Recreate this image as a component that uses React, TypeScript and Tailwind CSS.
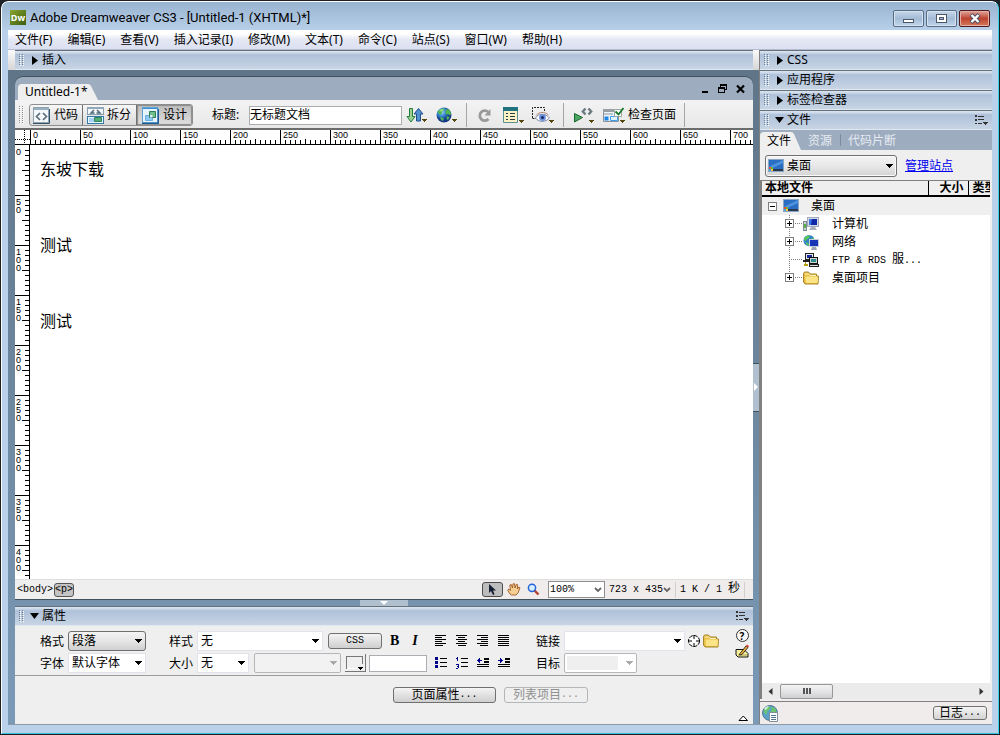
import React, { useEffect, useRef, useState } from 'react';

const UI_FONT = "font-['Noto_Sans','Noto_Sans_CJK_SC',sans-serif]";
const MONO_FONT = "font-['Liberation_Mono','Noto_Sans_CJK_SC',monospace]";
const RULER_FONT = "font-['Liberation_Sans',sans-serif]";

const MENUS = ['文件(F)', '编辑(E)', '查看(V)', '插入记录(I)', '修改(M)', '文本(T)', '命令(C)', '站点(S)', '窗口(W)', '帮助(H)'];

/* ---------- small shared pieces ---------- */

const Grip = ({ tall = false }: { tall?: boolean }) => (
  <svg width="5" height={tall ? 18 : 12} shapeRendering="crispEdges" className="shrink-0">
    {Array.from({ length: tall ? 9 : 6 }, (_, i) => (
      <g key={i}>
        <path d={`M0 ${i * 2}h1v1h-1zM3 ${i * 2}h1v1h-1z`} fill={tall ? '#8f8f8f' : '#6f7f95'} />
        <path d={`M1 ${i * 2 + 1}h1v1h-1zM4 ${i * 2 + 1}h1v1h-1z`} fill="#fff" />
      </g>
    ))}
  </svg>
);

const Caret = ({ color = '#000' }: { color?: string }) => (
  <svg width="7" height="4" shapeRendering="crispEdges">
    <path d="M0 0h7v1h-1v1h-1v1h-1v1h-1v-1h-1v-1h-1v-1h-1z" fill={color} />
  </svg>
);

const OptionsIcon = () => (
  <svg width="13" height="10" shapeRendering="crispEdges">
    <path d="M0 0h2v2h-2zM0 4h2v2h-2zM0 8h2v1h-2zM3 1h6v1h-6zM3 4h6v1h-6zM3 8h4v1h-4z" fill="#333" />
    <path d="M8 7h5v1h-1v1h-1v1h-1v-1h-1v-1h-1z" fill="#333" />
  </svg>
);

const PanelHeader = ({ title, open = false, options = false }: { title: string; open?: boolean; options?: boolean }) => (
  <div className="flex h-5 shrink-0 items-center border-t border-[#68727e] bg-linear-to-b from-[#d7e2ef] from-5% via-[#afc1d9] via-20% to-[#c9d6e5] pb-px pl-1 shadow-[inset_0_-1px_0_#dfe7f0]">
    <Grip />
    <button aria-expanded={open} className="ml-1.5 flex items-center text-xs leading-4">
      <span className="flex w-[12px] items-center">
        {open ? (
          <svg width="9" height="6"><path d="M0 0h9l-4.500 6z" /></svg>
        ) : (
          <svg width="7" height="9" className="ml-0.5"><path d="M0 0v9l6-4.500z" /></svg>
        )}
      </span>
      {title}
    </button>
    {options && (
      <button aria-label="面板选项" className="ml-auto mr-1">
        <OptionsIcon />
      </button>
    )}
  </div>
);

interface ComboProps {
  label: string;
  value?: string;
  look?: 'raised' | 'flat' | 'inset';
  disabled?: boolean;
  className?: string;
  id?: string;
}

const COMBO_LOOKS = {
  raised: 'rounded-[3px] border-[#707070] bg-linear-to-b from-[#f4f4f4] via-[#e6e6e6] to-[#cfcfcf]',
  flat: 'border-[#e2e3ea] bg-white disabled:rounded-[2px] disabled:border-[#b4b7b8] disabled:bg-[#f2f2f2]',
  inset: 'rounded-[2px] border-[#b4b7b8] bg-linear-to-r from-[#efefef] from-75% to-white to-75% shadow-[inset_0_0_0_2px_#fff]',
};

const Combo = ({ label, value = '', look = 'flat', disabled = false, className = '', id }: ComboProps) => (
  <div className={`relative shrink-0 ${className}`}>
    <select
      id={id}
      aria-label={label}
      disabled={disabled}
      defaultValue={value}
      className={`block h-5 w-full appearance-none border pl-[3px] text-xs leading-4 outline-none ${COMBO_LOOKS[look]}`}
    >
      <option>{value}</option>
    </select>
    <span className="pointer-events-none absolute inset-y-0 right-1 flex items-center">
      <Caret color={disabled ? '#aaa' : '#000'} />
    </span>
  </div>
);

/* ---------- toolbar icons ---------- */

const DropMark = ({ x, y }: { x: number; y: number }) => (
  <path d={`M${x} ${y}h5v1h-1v1h-1v1h-1v-1h-1v-1h-1z`} fill="#55480f" shapeRendering="crispEdges" />
);

const CodeIcon = () => (
  <svg width="17" height="17">
    <rect x=".5" y=".5" width="15" height="15" fill="#f4f8fb" stroke="#8fa3b1" />
    <path d="M1 1h15v2H1z" fill="#9bb0bf" />
    <path d="M0 16.500h16.500V2" fill="none" stroke="#35536a" />
    <path d="M7 6L3.500 9.500 7 13M10 6l3.500 3.500L10 13" fill="none" stroke="#5c6e7c" strokeWidth="1.700" />
  </svg>
);

const SplitIcon = () => (
  <svg width="17" height="17">
    <rect x=".5" y=".5" width="16" height="7" fill="#f4f8fb" stroke="#879dac" />
    <path d="M0 0h17v2H0z" fill="#91a8b8" />
    <path d="M7 3l-3 3h3.500M10 3l3 3H9.500" fill="none" stroke="#526b7b" strokeWidth="1.500" />
    <rect x=".5" y="9.500" width="16" height="7" fill="#e9f5ff" stroke="#327ba9" />
    <path d="M2 11h6v4H2z" fill="#a8d3f6" />
    <path d="M7.500 10.500h7v4h-7z" fill="#54ad72" stroke="#2f8560" />
  </svg>
);

const DesignIcon = () => (
  <svg width="17" height="17">
    <rect x=".5" y=".5" width="15" height="15" fill="#e5f3ff" stroke="#5fa3d6" />
    <path d="M1 1h15v1H1z" fill="#3b91cf" />
    <path d="M0 16.500h16.500V2" fill="none" stroke="#205b90" strokeWidth="1.500" />
    <path d="M3.500 8.500h7v5h-7z" fill="#8ec8f5" stroke="#6aaede" />
    <path d="M7.500 4.500h6v6h-6z" fill="#6cc088" stroke="#2f7d50" />
    <path d="M8 8h2.500v2.500H8z" fill="#d9f0ff" />
  </svg>
);

const TransferIcon = () => (
  <svg width="21" height="17">
    <path d="M3.500 1.500h3v8H9L5 15 1 9.500h2.500z" fill="#9bd093" stroke="#267d3b" />
    <path d="M10.500 14V7H8l4.500-5.500L17 7h-2.500v7z" fill="#5290cd" stroke="#1d4f8f" />
    <DropMark x={16} y={12} />
  </svg>
);

const GlobeIcon = () => (
  <svg width="21" height="17">
    <defs>
      <radialGradient id="sea" cx=".35" cy=".3">
        <stop offset="0" stopColor="#a6dcfa" />
        <stop offset=".6" stopColor="#2f7cc9" />
        <stop offset="1" stopColor="#173a88" />
      </radialGradient>
    </defs>
    <circle cx="8" cy="8" r="7.500" fill="url(#sea)" />
    <path d="M1.500 5c1.500-3 4.500-4 7-3.500L7.500 3.500 6 4.500v2L4 7.500 2.500 6.500zM10.500 2l3 1 1.800 4-2 1.500-1-1.500-2 .5-1-2.500zM4 9.500l4 2-1 2.500-2-1zM11 9l2.500 1-1.500 3-1.500-1z" fill="#4fb453" />
    <path d="M3 4c1.500-1.500 3-2 5-1.800L6.500 3.500 5 4.500z" fill="#a8e68c" />
    <DropMark x={16} y={12} />
  </svg>
);

const RefreshIcon = () => (
  <svg width="15" height="15">
    <path d="M11.500 11a5 5 0 1 1-.3-7" fill="none" stroke="#999" strokeWidth="2.800" />
    <path d="M13.500 1v6.500H7.500z" fill="#999" />
  </svg>
);

const ViewOptionsIcon = () => (
  <svg width="21" height="17">
    <path d="M.5 1.500h14v14H.5z" fill="#faf1c4" stroke="#5b8f92" />
    <path d="M0 0h15v4H0z" fill="#1f7480" />
    <path d="M3 6h2v1H3zM3 9h2v1H3zM3 12h2v1H3zM7 6h5v1H7zM7 9h5v1H7zM7 12h5v1H7z" fill="#273b41" shapeRendering="crispEdges" />
    <DropMark x={16} y={13} />
  </svg>
);

const VisualAidsIcon = () => (
  <svg width="23" height="17">
    <path d="M.5 11V.5h12V5M.5 11.500H4" fill="none" stroke="#222" strokeDasharray="2 1" />
    <path d="M3.500 11c3-5 10-5 14 0-4 4.500-11 4.500-14 0z" fill="#fff" stroke="#7d89a6" />
    <path d="M4 8.500c3-4 9-4 12.500-.5" fill="none" stroke="#b58878" />
    <circle cx="10.500" cy="10.500" r="3.400" fill="#6b91db" />
    <circle cx="10.500" cy="10.500" r="1.500" fill="#182b60" />
    <DropMark x={17} y={13} />
  </svg>
);

const ValidateIcon = () => (
  <svg width="21" height="17">
    <path d="M1.500 6.500l8 4-8 4.500z" fill="#4ba564" stroke="#17672d" />
    <path d="M12.500 1.500L9.800 4.500l2.700 3M15.500 1.500l2.700 3-2.700 3" fill="none" stroke="#6d7a82" strokeWidth="2.400" />
    <DropMark x={16} y={13} />
  </svg>
);

const CheckPageIcon = () => (
  <svg width="22" height="17">
    <path d="M.5 3.500h15v11H.5z" fill="#eef2f5" stroke="#8c9297" />
    <path d="M0 2h11v3H0z" fill="#999ea3" />
    <path d="M1 6h9v2H1z" fill="#b9c6cf" />
    <path d="M1.500 9.500h4v4h-4z" fill="#1c86e8" />
    <path d="M7.500 9.500h7v4h-7z" fill="#dff2ff" stroke="#40a0ed" />
    <path d="M11.500 2.500h7v7h-7z" fill="#fff" stroke="#9da8a2" />
    <path d="M12.500 4.500l3 3L20.500 1" fill="none" stroke="#14752b" strokeWidth="1.800" />
    <DropMark x={17} y={13} />
  </svg>
);

/* ---------- title bar and menu ---------- */

const TitleBar = () => (
  <header className="flex h-7 shrink-0 items-start pl-[2px] pr-[2px]">
    <div className="mt-2 flex h-[15px] w-4 items-center justify-center bg-linear-to-br from-[#8ba62c] to-[#3c5d11] text-[9px] font-bold leading-none text-white">Dw</div>
    <h1 className="ml-1 mt-2 font-['Roboto','Noto_Sans',sans-serif] text-[13px] leading-4 text-black">Adobe Dreamweaver CS3 - [Untitled-1 (XHTML)*]</h1>
    <div className="ml-auto mt-2 flex gap-0.5">
      <button aria-label="最小化" className="flex h-[17px] w-[31px] items-center justify-center rounded-xs border border-[#586b83] bg-linear-to-b from-[#c6d7ea] via-[#a4bbd6] to-[#c1d6eb] shadow-[inset_0_0_0_1px_#d6e4f2]">
        <svg width="11" height="11"><rect x=".5" y="6.500" width="10" height="3" fill="#fff" stroke="#4b5669" /></svg>
      </button>
      <button aria-label="最大化" className="flex h-[17px] w-[31px] items-center justify-center rounded-xs border border-[#586b83] bg-linear-to-b from-[#c6d7ea] via-[#a4bbd6] to-[#c1d6eb] shadow-[inset_0_0_0_1px_#d6e4f2]">
        <svg width="11" height="11"><rect x=".5" y="1.500" width="10" height="8" fill="#fff" stroke="#4b5669" /><rect x="3.500" y="4.500" width="4" height="2" fill="#a4bbd6" stroke="#4b5669" /></svg>
      </button>
      <button aria-label="关闭" className="flex h-[17px] w-[31px] items-center justify-center rounded-xs border border-[#521a1d] bg-linear-to-b from-[#dda59b] via-[#bd4230] to-[#d27a5c] shadow-[inset_0_0_0_1px_#e3b0a5]">
        <svg width="12" height="11"><path d="M2 1.500l8 8M10 1.500l-8 8" stroke="#4b4f66" strokeWidth="4.200" /><path d="M2.500 2l7 7M9.500 2l-7 7" stroke="#fff" strokeWidth="2.400" /></svg>
      </button>
    </div>
  </header>
);

const MenuBar = () => (
  <nav className="flex h-5 shrink-0 items-center gap-px border-b border-[#b4bccd] bg-linear-to-b from-white from-20% via-[#e4e8f4] via-50% to-[#dbe0f2]">
    {MENUS.map((m) => (
      <button key={m} className="px-[7px] text-xs leading-4">{m}</button>
    ))}
  </nav>
);

/* ---------- rulers ---------- */

const range = (n: number) => Array.from({ length: n }, (_, i) => i);

// Number of 50px ruler segments needed to fill the element
const useSegments = (axis: 'width' | 'height') => {
  const ref = useRef<HTMLDivElement>(null);
  const [count, setCount] = useState(9);

  useEffect(() => {
    if (!ref.current) return;
    const observer = new ResizeObserver(([entry]) => setCount(Math.ceil(entry.contentRect[axis] / 50)));
    observer.observe(ref.current);
    return () => observer.disconnect();
  }, [axis]);

  return { ref, count };
};

const TopRuler = () => {
  const { ref, count } = useSegments('width');
  return (
    <div className="flex h-[15px] shrink-0 border-b border-black bg-white">
      <svg width="15" height="14" className="shrink-0" shapeRendering="crispEdges">
        <path d="M0 9.500h15M9.500 0v14" stroke="#000" strokeDasharray="1 1" />
      </svg>
      <div ref={ref} className="flex min-w-0 flex-1 overflow-x-clip">
        {range(count).map((i) => (
          <div key={i} className="flex h-[14px] w-[50px] shrink-0 flex-col justify-between border-l border-black">
            <span className={`pl-0.5 text-[9px] leading-[10px] ${RULER_FONT}`}>{i * 50}</span>
            <svg width="49" height="5" shapeRendering="crispEdges" className="-mt-1 shrink-0">
              {range(9).map((t) => (
                <rect key={t} x={t * 5 + 4} y={t === 4 ? 0 : 1} width="1" height="5" />
              ))}
            </svg>
          </div>
        ))}
      </div>
    </div>
  );
};

const SideRuler = () => {
  const { ref, count } = useSegments('height');
  return (
    <div ref={ref} className="w-[15px] shrink-0 overflow-y-clip border-r border-black bg-white">
      {range(count).map((i) => (
        <div key={i} className={`flex h-[50px] justify-between border-t ${i === 0 ? 'border-white' : 'border-black'}`}>
          <span className={`ml-px w-[6px] break-all pt-0.5 text-[9px] leading-[8px] ${RULER_FONT}`}>{i * 50}</span>
          <svg width="7" height="49" shapeRendering="crispEdges">
            {range(9).map((t) => (
              <rect key={t} x={t === 4 ? 0 : 3} y={t * 5 + 4} width="7" height="1" />
            ))}
          </svg>
        </div>
      ))}
    </div>
  );
};

/* ---------- document window ---------- */

const DocumentTabs = () => (
  <div className="flex h-6 shrink-0 items-end rounded-t-lg border-t border-[#41525f] bg-[#9dacbf] pl-[3px]">
    <button className="h-4 rounded-tl-sm bg-[#efefef] pl-[7px] text-xs leading-4">Untitled-1*</button>
    <svg width="10" height="16" className="shrink-0"><path d="M0 0q2 0 3 2l7 14H0z" fill="#efefef" /></svg>
    <div className="mb-1.5 ml-auto mr-2 flex items-end gap-2">
      <button aria-label="最小化文档"><svg width="8" height="10"><path d="M1 7h6v2H1z" /></svg></button>
      <button aria-label="还原文档">
        <svg width="11" height="10" shapeRendering="crispEdges"><path d="M3 0h7v6H8V5h1V2H4v1H3zM1 3h7v6H1zM2 5v3h5V5z" fillRule="evenodd" /></svg>
      </button>
      <button aria-label="关闭文档"><svg width="9" height="10"><path d="M1 1.500l7 7M8 1.500l-7 7" stroke="#000" strokeWidth="2.200" /></svg></button>
    </div>
  </div>
);

const Divider = ({ className = '' }: { className?: string }) => <span className={`h-6 w-px shrink-0 bg-[#a5a5a5] ${className}`} />;

const DocumentToolbar = () => (
  <div className="flex h-[30px] shrink-0 items-center border-b-2 border-[#6c6c6c] bg-linear-to-b from-[#f3f3f3] to-[#e8e8e8] pl-1 pt-0.5 text-xs leading-4">
    <Grip tall />
    <div className="ml-[5px] flex h-[22px] shrink-0 overflow-hidden rounded-[3px] border border-[#8e8e8e] bg-linear-to-b from-[#f7f7f7] to-[#d9d9d9]">
      <button className="flex w-[53px] items-center gap-1 border-r border-[#6f6f6f] pl-[3px]"><CodeIcon />代码</button>
      <button className="flex w-[54px] items-center gap-[3px] border-r border-[#6f6f6f] pl-1"><SplitIcon />拆分</button>
      <button aria-pressed className="flex w-[55px] items-center gap-1 bg-linear-to-b from-[#bdbdbd] to-[#e0e0e0] pl-[5px] shadow-[inset_0_0_1px_1px_#8a8a8a]"><DesignIcon />设计</button>
    </div>
    <label htmlFor="doc-title" className="ml-[19px] w-[37px] shrink-0">标题:</label>
    <input id="doc-title" defaultValue="无标题文档" className="h-[19px] w-[153px] shrink-0 border border-[#abadb3] bg-white pb-0.5 outline-none" />
    <button aria-label="文件管理" className="ml-1"><TransferIcon /></button>
    <button aria-label="在浏览器中预览" className="ml-[9px]"><GlobeIcon /></button>
    <Divider className="ml-[9px]" />
    <button aria-label="刷新" className="ml-2.5"><RefreshIcon /></button>
    <button aria-label="视图选项" className="ml-[11px]"><ViewOptionsIcon /></button>
    <button aria-label="可视化助理" className="ml-2"><VisualAidsIcon /></button>
    <Divider className="ml-2" />
    <button aria-label="验证标记" className="ml-[9px]"><ValidateIcon /></button>
    <button className="ml-[9px] flex shrink-0 items-center gap-[3px]"><CheckPageIcon />检查页面</button>
    <Divider className="ml-2" />
  </div>
);

const StatusBar = () => (
  <div className={`flex h-5 shrink-0 items-center border-t border-[#dedede] bg-[#efefef] text-[10px] leading-3 ${MONO_FONT}`}>
    <button className="ml-0.5 w-[37px] text-left">&lt;body&gt;</button>
    <button className="rounded-[3px] border border-[#555] bg-[#c4c4c4]">&lt;p&gt;</button>
    <div className="ml-auto flex h-full items-center bg-[#f1ecec]">
      <button aria-label="选取工具" aria-pressed className="flex h-[15px] w-[21px] items-center justify-center rounded-[3px] border border-[#4d4d4d] bg-[#bdbdbd]">
        <svg width="8" height="12"><path d="M1 0v9l2-2 2 4 1.500-.8L5 6.500h3z" fill="#151e33" /></svg>
      </button>
      <button aria-label="手形工具" className="ml-1">
        <svg width="14" height="13">
          <path d="M3 11L.8 7.500 1.500 6l2 1.500L2.800 2l1.500-.5L5.500 5 6 .8h1.500L8 5l1.300-3.700 1.400.4L10.300 6l1.500-2 1.200.7-2 5.300-2 2H4.500z" fill="#f6cf95" stroke="#9c5a20" strokeWidth=".9" />
        </svg>
      </button>
      <button aria-label="缩放工具" className="ml-1.5">
        <svg width="13" height="13"><path d="M7.500 7.500l4 4" stroke="#b8402a" strokeWidth="2.400" /><circle cx="5" cy="4.800" r="3.600" fill="#d6efff" stroke="#2663d6" strokeWidth="1.500" /></svg>
      </button>
      <div className="relative ml-2 w-[57px]">
        <select aria-label="缩放比例" className="block h-[17px] w-full appearance-none border border-[#8f8f8f] bg-white pl-px outline-none">
          <option>100%</option>
        </select>
        <svg width="8" height="6" className="pointer-events-none absolute right-[3px] top-[6px]"><path d="M1 1l3 3 3-3" fill="none" stroke="#666" strokeWidth="1.800" /></svg>
      </div>
      <button className="ml-1 flex items-center whitespace-pre">
        723 x 435
        <svg width="8" height="6"><path d="M1 1l3 3 3-3" fill="none" stroke="#666" strokeWidth="1.800" /></svg>
      </button>
      <span className="ml-1 h-4 w-px bg-[#cfcfcf]" />
      <span className="ml-1 whitespace-pre">1 K / 1 <span className="text-xs leading-3">秒</span></span>
      <span className="ml-1 mr-2 h-4 w-px bg-[#cfcfcf]" />
    </div>
  </div>
);

const DocumentWindow = () => (
  <section className="mt-1.5 flex min-h-0 flex-1 flex-col border-b border-[#41525f]">
    <DocumentTabs />
    <DocumentToolbar />
    <TopRuler />
    <div className="flex min-h-0 flex-1 bg-white">
      <SideRuler />
      <article className="flex-1 pl-2.5 pt-[14px] text-base leading-5">
        <p>东坡下载</p>
        <p className="mt-14">测试</p>
        <p className="mt-14">测试</p>
      </article>
    </div>
    <StatusBar />
  </section>
);

/* ---------- properties panel ---------- */

const LinesIcon = ({ d, blue }: { d: string; blue?: string }) => (
  <svg width="13" height="12" shapeRendering="crispEdges">
    <path d={d} fill="#000" />
    {blue && <path d={blue} fill="#00008b" />}
  </svg>
);

const FORMAT_ICONS = [
  { label: '左对齐', d: 'M0 0h11v1H0zM0 2h7v1H0zM0 4h11v1H0zM0 6h7v1H0zM0 8h11v1H0zM0 10h8v1H0z' },
  { label: '居中对齐', d: 'M0 0h11v1H0zM2 2h7v1H2zM0 4h11v1H0zM2 6h7v1H2zM0 8h11v1H0zM2 10h8v1H2z' },
  { label: '右对齐', d: 'M0 0h11v1H0zM4 2h7v1H4zM0 4h11v1H0zM4 6h7v1H4zM0 8h11v1H0zM3 10h8v1H3z' },
  { label: '两端对齐', d: 'M0 0h11v1H0zM0 2h11v1H0zM0 4h11v1H0zM0 6h11v1H0zM0 8h11v1H0zM0 10h11v1H0z' },
  { label: '项目列表', d: 'M5 1h7v1H5zM5 5h7v1H5zM5 9h7v1H5z', blue: 'M0 0h3v3H0zM0 4h3v3H0zM0 8h3v3H0z' },
  { label: '编号列表', d: 'M5 1h7v1H5zM5 5h7v1H5zM5 9h7v1H5z', blue: 'M1 0h1v4H1zM0 1h1v1H0zM0 7h3v1H0zM2 8h1v3H2zM1 9h1v1H1zM0 11h2v1H0z' },
  { label: '文本凸出', d: 'M7 1h5v2H7zM7 4h5v2H7zM0 7h12v1H0zM0 9h12v1H0z', blue: 'M0 3h5v1H0zM1 2h1v3H1zM2 1h1v5H2z' },
  { label: '文本缩进', d: 'M7 1h5v2H7zM7 4h5v2H7zM0 7h12v1H0zM0 9h12v1H0z', blue: 'M0 3h5v1H0zM3 2h1v3H3zM2 1h1v5H2z' },
];

const FolderIcon = () => (
  <svg width="16" height="14">
    <path d="M.5 11V2.500l1-1.500h4l1.500 2h6.500v2h2l-.5 8H2z" fill="#e9bf45" stroke="#a8852a" />
    <path d="M2.500 5.500h12.500l-.5 6.500H3z" fill="#fbe486" />
    <path d="M2 3h4l1 1.500h6" stroke="#fff5bd" fill="none" />
  </svg>
);

const PropertiesPanel = () => (
  <section className="flex shrink-0 flex-col">
    <PanelHeader title="属性" open options />
    <div className="flex flex-col bg-[#efefef] text-xs">
      <div className="flex h-[50px] border-b border-[#9c9c9c] pl-[25px] pt-[5px]">
        <div className="grid shrink-0 grid-cols-[28px_78px] content-start items-center gap-y-0.5">
          <label htmlFor="fmt" className="pt-0.5">格式</label>
          <Combo id="fmt" label="格式" value="段落" look="raised" />
          <label htmlFor="font" className="pt-0.5">字体</label>
          <Combo id="font" label="字体" value="默认字体" />
        </div>

        <div className="ml-[23px] flex shrink-0 flex-col gap-0.5">
          <div className="flex h-5 items-center">
            <label htmlFor="style" className="w-7 pt-0.5">样式</label>
            <Combo id="style" label="样式" value="无" className="w-[126px]" />
            <button className={`ml-[5px] h-4 w-[54px] rounded-[3px] border border-[#707070] bg-linear-to-b from-[#f4f4f4] to-[#cfcfcf] text-[10px] leading-3 ${MONO_FONT}`}>CSS</button>
            <button className="ml-2 font-['Liberation_Serif',serif] text-sm font-bold leading-4">B</button>
            <button className="ml-[13px] font-['Liberation_Serif',serif] text-sm font-bold italic leading-4">I</button>
          </div>
          <div className="flex h-5 items-center">
            <label htmlFor="size" className="w-7 pt-0.5">大小</label>
            <Combo id="size" label="大小" value="无" className="w-[52px]" />
            <Combo label="单位" disabled className="ml-[5px] w-[87px]" />
            <button aria-label="文本颜色" className="ml-1 h-[18px] w-[21px] border-b border-r border-[#777]">
              <svg width="20" height="16" shapeRendering="crispEdges">
                <path d="M1.500 14V1.500H17V9" fill="none" stroke="#777" />
                <path d="M2 13h10" stroke="#fff" />
                <path d="M13 12h5v1h-1v1h-1v1h-1v-1h-1v-1h-1z" />
              </svg>
            </button>
            <input aria-label="颜色值" className="ml-[3px] h-[17px] w-[58px] border border-[#abadb3] bg-white" />
          </div>
        </div>

        <div className="ml-2 grid shrink-0 grid-cols-[repeat(4,21px)] content-start gap-y-0.5">
          {FORMAT_ICONS.map((icon) => (
            <button key={icon.label} aria-label={icon.label} className="flex h-5 items-center">
              <LinesIcon d={icon.d} blue={icon.blue} />
            </button>
          ))}
        </div>

        <div className="ml-[17px] grid shrink-0 grid-cols-[28px_121px] content-start items-center gap-y-0.5">
          <label htmlFor="link" className="pt-0.5">链接</label>
          <Combo id="link" label="链接" />
          <label htmlFor="target" className="pt-0.5">目标</label>
          <Combo id="target" label="目标" look="inset" disabled className="w-[73px]" />
        </div>

        <div className="ml-[2px] flex h-5 shrink-0 items-center gap-0.5">
          <button aria-label="指向文件">
            <svg width="14" height="14">
              <circle cx="7" cy="7" r="5.500" fill="#fff" stroke="#000" strokeDasharray="4 1" />
              <path d="M7 1v4M7 9v4M1 7h4M9 7h4" stroke="#000" />
            </svg>
          </button>
          <button aria-label="浏览文件"><FolderIcon /></button>
        </div>

        <div className="-mt-0.5 ml-auto mr-1 flex shrink-0 flex-col items-center gap-0.5">
          <button aria-label="帮助" className="flex h-[13px] w-[13px] items-center justify-center rounded-full border border-[#333] bg-[#f8f8f8] text-[10px] font-bold leading-none">?</button>
          <button aria-label="快速标签编辑器">
            <svg width="14" height="14">
              <path d="M1 5.500h8l4 4v3.500H3l-2-2z" fill="#f7efa2" stroke="#111" />
              <path d="M3 11h9" stroke="#a5a044" />
              <path d="M5 9.500L11 2l2 1.500-6 7-2.500.5z" fill="#f0ac39" stroke="#222" strokeWidth=".9" />
              <path d="M11 2l1-1.500 2 1.500-1 1.500z" fill="#d84030" />
            </svg>
          </button>
        </div>
      </div>

      <div className="flex h-12 pt-[11px]">
        <div className="flex flex-1 items-start justify-center gap-2 pl-[212px]">
          <button className="flex h-4 w-[103px] items-center justify-center rounded-[3px] border border-[#707070] bg-linear-to-b from-[#f4f4f4] to-[#cfcfcf] leading-4">
            页面属性<span className={`text-[10px] ${MONO_FONT}`}>...</span>
          </button>
          <button disabled className="flex h-4 w-[84px] items-center justify-center rounded-[3px] border border-[#b4b7b8] leading-4 text-[#909090]">
            列表项目<span className={`text-[10px] ${MONO_FONT}`}>...</span>
          </button>
        </div>
        <button aria-label="收起属性" className="-ml-4 mr-1 self-end pb-[3px]">
          <svg width="11" height="6"><path d="M1 5.500h8.500L5.300 1z" fill="#fff" stroke="#000" /></svg>
        </button>
      </div>
    </div>
  </section>
);

/* ---------- files panel ---------- */

const DesktopIcon = () => (
  <svg width="16" height="14">
    <rect x=".5" y=".5" width="15" height="12" fill="#2a6ec4" stroke="#8aa5c4" />
    <path d="M1 8C5 5 10 4 15 1v3C11 6 6 8 3 10H1z" fill="#4d93de" />
    <path d="M5 10h10v2H5z" fill="#29394d" />
    <path d="M1 8h2v2H1z" fill="#e34c2c" /><path d="M3 8h2v2H3z" fill="#70b83a" /><path d="M1 10h2v2H1z" fill="#42a7e8" /><path d="M3 10h2v2H3z" fill="#f4ca30" />
  </svg>
);

const ComputerIcon = () => (
  <svg width="16" height="15">
    <rect x=".5" y="4.500" width="3" height="9" fill="#c9d0d5" stroke="#7f8a91" />
    <path d="M1 7h2v4H1z" fill="#57b347" />
    <rect x="4.500" y=".5" width="11" height="9" fill="#d5dbe5" stroke="#a3aabf" />
    <path d="M6 2h8v6H6z" fill="#1028a8" /><path d="M6 2h3l-1 6H6z" fill="#3a70e2" />
    <path d="M8 10h4l2 3H6z" fill="#a7afbd" />
  </svg>
);

const NetworkIcon = () => (
  <svg width="16" height="15">
    <circle cx="6" cy="5.500" r="5.500" fill="#2d83c6" />
    <path d="M1 4c1-3 4-4 6-3.500L6 3 3 5v2zM7 4l4-1v3L8 9 6 7zM3 7l3 2v2L3 9z" fill="#5ec653" />
    <rect x="6.500" y="4.500" width="9" height="7" fill="#1835b5" stroke="#c5cedd" />
    <path d="M9 12h4l1 3H8z" fill="#9ba5b4" />
  </svg>
);

const FtpIcon = () => (
  <svg width="16" height="15" shapeRendering="crispEdges">
    <rect x="2.500" y=".5" width="8" height="6" fill="#e8e8e8" stroke="#222" />
    <path d="M4 2h5v3H4z" fill="#1428a0" />
    <rect x="6.500" y="4.500" width="8" height="6" fill="#d2d2d2" stroke="#111" />
    <path d="M8 6h5v3H8z" fill="#2b8d8d" />
    <path d="M6 11h10v3H6zM0 7h6v2H0z" fill="#222" />
    <path d="M7 12h8v1H7z" fill="#ddd" />
    <path d="M2 9h1v2H2zM1 11h4v2H1z" fill="#b89f12" />
  </svg>
);

const Expander = ({ open = false }: { open?: boolean }) => (
  <svg width="9" height="9" shapeRendering="crispEdges">
    <rect x=".5" y=".5" width="8" height="8" fill="#fff" stroke="#808080" />
    <path d="M2 4h5v1H2z" />
    {!open && <path d="M4 2h1v5H4z" />}
  </svg>
);

const Branch = ({ leaf = false, last = false }: { leaf?: boolean; last?: boolean }) => (
  <svg width="18" height="18" shapeRendering="crispEdges" className="shrink-0">
    <path d={last ? 'M4.500 0v9' : 'M4.500 0v18'} stroke="#808080" strokeDasharray="1 1" />
    <path d="M4 8.500h14" stroke="#808080" strokeDasharray="1 1" />
    {!leaf && (
      <g transform="translate(0 4)">
        <rect x=".5" y=".5" width="8" height="8" fill="#fff" stroke="#808080" />
        <path d="M2 4h5v1H2zM4 2h1v5H4z" />
      </g>
    )}
  </svg>
);

const TREE: { name: string; latin?: string; tail?: string; icon: React.ReactNode; leaf?: boolean; last?: boolean }[] = [
  { name: '计算机', icon: <ComputerIcon /> },
  { name: '网络', icon: <NetworkIcon /> },
  { name: '服', latin: 'FTP & RDS ', tail: '...', icon: <FtpIcon />, leaf: true },
  { name: '桌面项目', icon: <FolderIcon />, last: true },
];

const FilesTable = () => (
  <table className="w-full table-fixed border-collapse text-xs">
    <colgroup>
      <col />
      <col className="w-10" />
      <col className="w-[22px]" />
    </colgroup>
    <thead>
      <tr className="h-[15px] bg-[#efefef] leading-[14px]">
        <th className="border-b-2 border-r border-black p-0 pl-[3px] text-left">本地文件</th>
        <th className="border-b-2 border-r border-black p-0 pr-1 text-right">大小</th>
        <th className="overflow-hidden whitespace-nowrap border-b-2 border-black p-0 pl-1 text-left">类型</th>
      </tr>
    </thead>
    <tbody>
      <tr className="bg-[#efefef]">
        <td colSpan={3} className="p-0">
          <div className="flex h-[18px] items-center pl-1.5 leading-4">
            <button aria-label="折叠"><Expander open /></button>
            <span className="ml-1.5 w-[28px]"><DesktopIcon /></span>
            桌面
          </div>
        </td>
      </tr>
      {TREE.map((row) => (
        <tr key={row.name}>
          <td colSpan={3} className="p-0">
            <div className="flex h-[18px] items-center pl-[23px] leading-4">
              <Branch leaf={row.leaf} last={row.last} />
              <span className="w-[29px]">{row.icon}</span>
              <span className="whitespace-pre">
                {row.latin && <span className={`${MONO_FONT} text-[10px]`}>{row.latin}</span>}
                {row.name}
                {row.tail && <span className={`${MONO_FONT} text-[10px]`}>{row.tail}</span>}
              </span>
            </div>
          </td>
        </tr>
      ))}
    </tbody>
  </table>
);

const FilesPanel = () => (
  <section className="flex min-h-0 flex-1 flex-col bg-[#efefef]">
    <PanelHeader title="文件" open options />
    <div className="flex h-5 shrink-0 items-end bg-[#9dacbf] text-xs leading-4 text-[#e6ebf2]">
      <button className="h-[18px] rounded-tl-sm bg-[#efefef] pl-[7px] text-black">文件</button>
      <svg width="10" height="18" className="shrink-0"><path d="M0 0q2 0 3 2l7 16H0z" fill="#efefef" /></svg>
      <button className="ml-[7px] h-[18px]">资源</button>
      <span className="mb-1 ml-2 mr-[7px] h-3 w-px bg-[#7d8b9d]" />
      <button className="h-[18px]">代码片断</button>
    </div>
    <div className="flex h-[30px] shrink-0 items-center pl-[5px] pt-px text-xs">
      <div className="relative h-[22px] w-[132px]">
        <select aria-label="站点" className="block h-full w-full appearance-none rounded-[3px] border border-[#707070] bg-linear-to-b from-[#f4f4f4] via-[#e8e8e8] to-[#d4d4d4] pl-[21px] shadow-[inset_0_0_0_1px_#fafafa]">
          <option>桌面</option>
        </select>
        <span className="pointer-events-none absolute inset-y-0 left-[3px] flex items-center"><DesktopIcon /></span>
        <span className="pointer-events-none absolute inset-y-0 right-1 flex items-center"><Caret /></span>
      </div>
      <a href="#sites" className="ml-2 text-[#0000ee] underline">管理站点</a>
    </div>
    <div className="mr-0.5 flex min-h-0 flex-1 flex-col border-l-2 border-t border-[#808080] bg-white">
      <FilesTable />
      <div className="mt-auto flex h-[16px] shrink-0 items-center bg-[#ebebeb] px-1.5">
        <svg width="5" height="7"><path d="M4.500 0v7L.5 3.500z" fill="#333" /></svg>
        <div className="ml-[7px] flex h-[15px] w-[53px] items-center justify-center gap-px rounded-[2px] border border-[#979797] bg-linear-to-b from-[#f3f3f3] via-[#e4e4e6] to-[#cfcfd3]">
          <span className="h-1.5 w-0.5 bg-[#555]" /><span className="h-1.5 w-0.5 bg-[#555]" /><span className="h-1.5 w-0.5 bg-[#555]" />
        </div>
        <svg width="5" height="7" className="ml-auto"><path d="M.5 0v7l4-3.500z" fill="#333" /></svg>
      </div>
    </div>
    <div className="mt-0.5 flex h-[23px] shrink-0 items-center border-t border-[#808080] bg-[#f1ecec] pl-0.5 pr-[5px]">
      <svg width="17" height="17">
        <circle cx="8" cy="8" r="7.500" fill="#5ba2c7" stroke="#547a91" />
        <path d="M2 5c2-3 4-4 7-3L7 5 5 6v3L2 8zM10 2l4 2v3H9z" fill="#6cc46c" />
        <path d="M2 4c1-2 3-3 5-3L4 5z" fill="#d8f3dc" />
        <path d="M7.500 7.500h8v9h-8z" fill="#fff" stroke="#7b8d9c" /><path d="M9 10.500h5M9 12.500h5M9 14.500h5" stroke="#54748e" />
      </svg>
      <button className="ml-auto flex h-[14px] w-[54px] items-center justify-center rounded-[3px] border border-[#707070] bg-linear-to-b from-[#f4f4f4] to-[#d4d4d4] text-xs leading-4">
        日志<span className={`${MONO_FONT} text-[10px]`}>...</span>
      </button>
    </div>
  </section>
);

const App = () => (
  <div className={`h-screen bg-[#1d2328] ${UI_FONT} text-black`}>
    <div className="h-full overflow-hidden rounded-t-lg border border-[#1c1f24]">
      <div className="flex h-full flex-col rounded-t-[7px] border border-b-[#35bfd6] border-l-white border-r-[#35d6ea] border-t-white bg-[#b9d1ea] bg-linear-to-b from-[#99b4d1] to-[#b9d1ea] to-[30px] px-1.5 pb-2">
        <TitleBar />
        <MenuBar />
        <main className="flex min-h-0 flex-1 border-b border-[#8d9aa6] bg-linear-to-b from-[#5f7487] to-[#7b9ab7]">
          <div className="flex w-[7px] shrink-0 flex-col">
            <span className="h-5 bg-linear-to-b from-[#fafafa] to-[#d6d6d6]" />
          </div>
          <div className="flex min-w-0 flex-1 flex-col">
            <PanelHeader title="插入" />
            <DocumentWindow />
            <div className="flex h-1.5 shrink-0 justify-center">
              <button aria-label="折叠属性面板" className="flex w-12 items-center justify-center bg-[#b1c0ce]">
                <svg width="8" height="4"><path d="M0 0h8L4 4z" fill="#fff" /></svg>
              </button>
            </div>
            <PropertiesPanel />
          </div>
          <div className="flex w-[7px] shrink-0 flex-col justify-between border-r border-[#808080]">
            <span className="h-5 shrink-0 bg-linear-to-b from-[#fafafa] to-[#d6d6d6]" />
            <button aria-label="折叠面板组" className="flex h-[49px] items-center justify-center border-y border-[#41525f] bg-[#b1c0ce]">
              <svg width="4" height="8"><path d="M0 0v8l4-4z" fill="#fff" /></svg>
            </button>
            <span className="h-5 shrink-0" />
          </div>
          <aside className="flex w-[232px] shrink-0 flex-col">
            <PanelHeader title="CSS" />
            <PanelHeader title="应用程序" />
            <PanelHeader title="标签检查器" />
            <FilesPanel />
          </aside>
        </main>
      </div>
    </div>
  </div>
);

export default App;
